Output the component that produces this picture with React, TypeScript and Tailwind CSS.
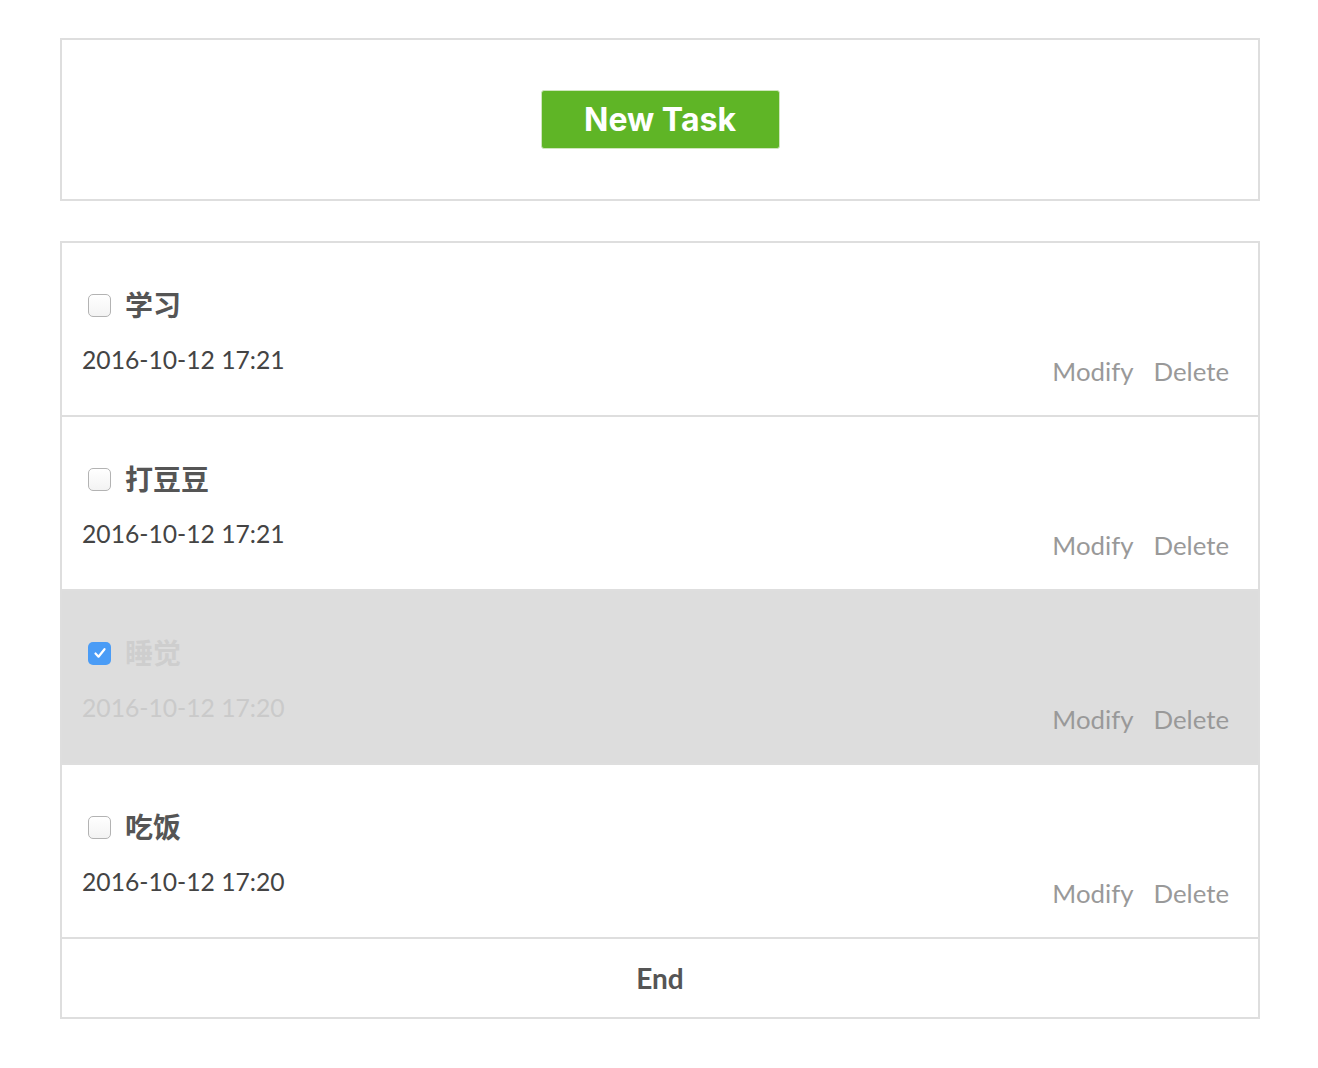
import { useState } from 'react';

type Task = {
  id: number;
  title: string;
  time: string;
  done: boolean;
};

const INITIAL_TASKS: Task[] = [
  { id: 1, title: '学习', time: '2016-10-12 17:21', done: false },
  { id: 2, title: '打豆豆', time: '2016-10-12 17:21', done: false },
  { id: 3, title: '睡觉', time: '2016-10-12 17:20', done: true },
  { id: 4, title: '吃饭', time: '2016-10-12 17:20', done: false }
];

const FONT = "font-['Lato','Noto_Sans_CJK_SC',sans-serif]";

const CheckBox = ({ checked, onChange }: { checked: boolean; onChange: () => void }) => (
  <button
    type="button"
    onClick={onChange}
    className={
      checked
        ? 'ml-[26px] flex h-[23px] w-[23px] items-center justify-center rounded-[5px] bg-[#4a9cf6]'
        : 'ml-[26px] h-[23px] w-[23px] rounded-[5px] border border-[#b3b3b3] bg-gradient-to-b from-white to-[#f3f3f3]'
    }
  >
    {checked && (
      <svg width="16" height="16" viewBox="0 0 16 16" fill="none">
        <path d="M3.5 8.5l3 3.2 6-7.5" stroke="white" strokeWidth="2.2" strokeLinecap="round" strokeLinejoin="round" />
      </svg>
    )}
  </button>
);

export default function App() {
  const [tasks, setTasks] = useState(INITIAL_TASKS);

  const toggle = (id: number) =>
    setTasks(tasks.map((t) => (t.id === id ? { ...t, done: !t.done } : t)));

  return (
    <div className={`${FONT} bg-white pt-[38px]`}>
      <div className="ml-[60px] w-[1200px]">
        <div className="flex justify-center border-2 border-[#dedede] py-[50px]">
          <button
            type="button"
            className="h-[59px] w-[239px] rounded-[3px] border border-[#cfe6bd] bg-[#5fb526] font-['Inter',sans-serif] text-[32px] font-bold text-white"
          >
            New Task
          </button>
        </div>

        <div className="mt-[40px] border-2 border-[#dedede]">
          {tasks.map((task) => (
            <div
              key={task.id}
              className={`flex items-end justify-between border-b-2 border-[#dedede] pb-[28px] pl-[20px] pr-[29px] pt-[42px] ${
                task.done ? 'bg-[#dddddd]' : 'bg-white'
              }`}
            >
              <div className="flex flex-col">
                <div className="-ml-[20px] flex h-10 items-center gap-[14px]">
                  <CheckBox checked={task.done} onChange={() => toggle(task.id)} />
                  <span
                    className={`text-[28px] font-bold ${
                      task.done ? 'text-[#cecece]' : 'text-[#555555]'
                    }`}
                  >
                    {task.title}
                  </span>
                </div>
                <span
                  className={`mb-[11px] mt-[19px] text-[24.7px] leading-8 ${
                    task.done ? 'text-[#cacaca]' : 'text-[#444444]'
                  }`}
                >
                  {task.time}
                </span>
              </div>
              <div className="flex gap-[20px] text-[25.8px] leading-8 text-[#999999]">
                <span>Modify</span>
                <span>Delete</span>
              </div>
            </div>
          ))}
          <div className="flex h-[78px] items-center justify-center text-[28px] font-bold text-[#555555]">
            End
          </div>
        </div>
      </div>
    </div>
  );
}
